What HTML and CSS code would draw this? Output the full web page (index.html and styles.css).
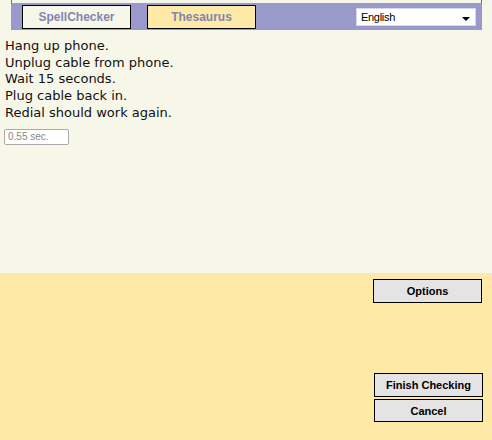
FILE: index.html
```html
<!DOCTYPE html>
<html>
<head>
<meta charset="utf-8">
<link rel="stylesheet" href="styles.css">
</head>
<body>
<div class="page">
  <div class="top">
    <div class="topbox"></div>
    <div class="toolbar">
      <div class="tab tab-spell">SpellChecker</div>
      <div class="tab tab-thes">Thesaurus</div>
      <div class="spacer"></div>
      <div class="lang">
        <span class="lang-text">English</span>
        <span class="arrow"></span>
      </div>
    </div>
    <div class="content">
      <div class="line">Hang up phone.</div>
      <div class="line">Unplug cable from phone.</div>
      <div class="line">Wait 15 seconds.</div>
      <div class="line">Plug cable back in.</div>
      <div class="line">Redial should work again.</div>
      <div class="timer">0.55 sec.</div>
    </div>
  </div>
  <div class="panel">
    <div class="btn">Options</div>
    <div class="grow"></div>
    <div class="btn btn-finish">Finish Checking</div>
    <div class="btn btn-cancel">Cancel</div>
  </div>
</div>
</body>
</html>
```
FILE: styles.css
```css
html, body {
  margin: 0;
  padding: 0;
}
body {
  background: #f7f7e9;
  width: 492px;
  height: 440px;
  overflow: hidden;
}
.page {
  display: flex;
  flex-direction: column;
  height: 440px;
}
.top {
  height: 273px;
  background: #f7f7e9;
  display: flex;
  flex-direction: column;
}
.topbox {
  margin: 0 10px 0 11px;
  height: 3px;
  border-left: 1px solid #6b6b6b;
  border-right: 1px solid #6b6b6b;
  border-bottom: 1px solid #a0a0a0;
  box-sizing: content-box;
}
.toolbar {
  margin: 0 10px 0 11px;
  height: 26px;
  background: #9999cc;
  display: flex;
  align-items: flex-start;
  padding-left: 11px;
  padding-right: 6px;
  box-sizing: border-box;
}
.tab {
  margin-top: 1px;
  width: 109px;
  height: 24px;
  box-sizing: border-box;
  border: 1px solid #000;
  display: flex;
  align-items: center;
  justify-content: center;
  font-family: "Liberation Sans", Arial, sans-serif;
  font-weight: bold;
  font-size: 12px;
  color: #8484b0;
}
.tab-spell {
  background: #f7f7e9;
}
.tab-thes {
  background: #ffe9a6;
  margin-left: 16px;
}
.spacer {
  flex: 1;
}
.lang {
  margin-top: 4px;
  width: 120px;
  height: 18px;
  box-sizing: border-box;
  background: #fff;
  border: 1px solid #d8d8e8;
  display: flex;
  align-items: center;
  padding-left: 4px;
  padding-right: 5px;
}
.lang-text {
  flex: 1;
  font-family: "Liberation Sans", Arial, sans-serif;
  font-size: 11px;
  letter-spacing: -0.3px;
  color: #000;
}
.arrow {
  width: 0;
  height: 0;
  border-left: 4px solid transparent;
  border-right: 4px solid transparent;
  border-top: 4px solid #000;
  margin-top: 3px;
}
.content {
  padding: 8px 5px 0 5px;
  font-family: "DejaVu Sans", Verdana, sans-serif;
  font-size: 13px;
  line-height: 16.67px;
  color: #111;
}
.timer {
  margin-top: 8px;
  margin-left: -1px;
  width: 65px;
  height: 16px;
  box-sizing: border-box;
  border: 1px solid #aaa;
  border-radius: 2px;
  background: #fff;
  font-family: "Liberation Sans", Arial, sans-serif;
  font-size: 10px;
  line-height: 14px;
  padding-left: 3px;
  color: #888;
}
.panel {
  flex: 1;
  background: #ffe9a6;
  display: flex;
  flex-direction: column;
  align-items: flex-end;
  padding: 6px 10px 18px 0;
}
.grow {
  flex: 1;
}
.btn {
  width: 109px;
  height: 24px;
  box-sizing: border-box;
  border: 1px solid #000;
  background: #e4e4e4;
  display: flex;
  align-items: center;
  justify-content: center;
  font-family: "Liberation Sans", Arial, sans-serif;
  font-weight: bold;
  font-size: 11px;
  color: #000;
}
.btn-finish {
  margin-right: -1px;
}
.btn-cancel {
  margin-top: 2px;
  margin-right: -1px;
  height: 23px;
}
```
